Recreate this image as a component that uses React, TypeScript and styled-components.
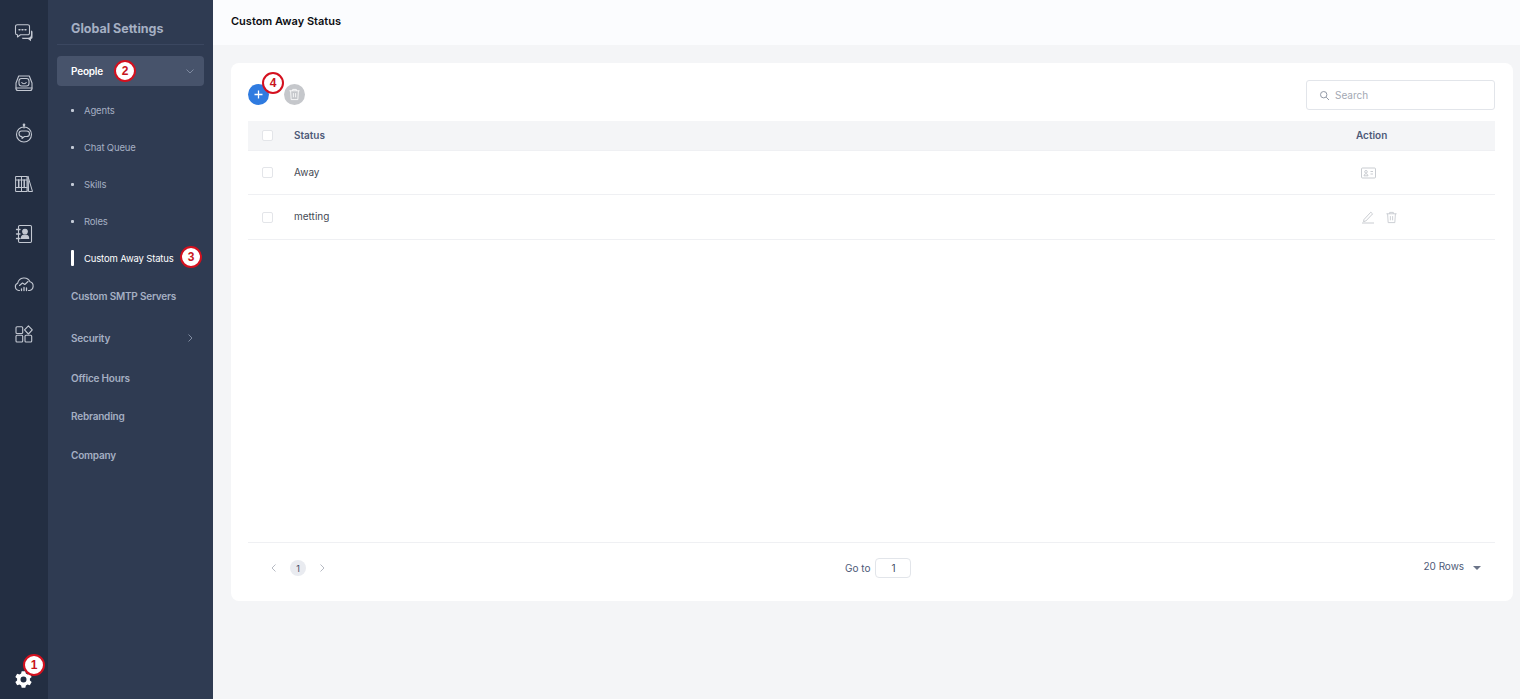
import React from "react";
import styled, { createGlobalStyle } from "styled-components";

const Global = createGlobalStyle`
  html, body { margin: 0; padding: 0; height: 100%; }
  body { font-family: Inter, "Liberation Sans", sans-serif; background: #f4f5f7; overflow: hidden; }
  * { box-sizing: border-box; }
`;

const Page = styled.div`display: flex; width: 1520px; height: 699px;`;
const Rail = styled.nav`
  position: relative; width: 48px; flex: none; background: #232e42; display: flex; flex-direction: column; align-items: center; padding-top: 8px;
`;
const RailItem = styled.div`
  width: 48px; height: 50.2px; display: flex; align-items: center; justify-content: center; color: #c3c8d2;
`;
const RailFoot = styled.div`margin-top: auto; align-self: flex-start; height: 40px; display: flex; align-items: center; justify-content: center; width: 46px; color: #fff;`;

const Side = styled.aside`width: 165px; flex: none; background: #2f3b52; padding: 0 9px; display: flex; flex-direction: column;`;
const SideTitle = styled.div`
  height: 45px; padding: 13px 0 0 14px; border-bottom: 1px solid #3b4760; display: flex; align-items: center;
  color: #a5afc3; font-size: 12.5px; font-weight: 700;
`;
const Group = styled.div<{ $h: number; $active?: boolean }>`
  position: relative; height: ${p => p.$h}px; padding: 0 9px 0 14px; display: flex; align-items: center; justify-content: space-between;
  border-radius: 4px; font-size: 10px; font-weight: 600; letter-spacing: -0.2px;
  color: ${p => (p.$active ? "#fff" : "#a5afc3")};
  background: ${p => (p.$active ? "#47536b" : "transparent")};
  ${p => p.$active && "margin-top: 11px;"}
`;
const Sub = styled.div<{ $active?: boolean }>`
  position: relative; height: 37px; padding-left: 27px; display: flex; align-items: center; font-size: 9.5px; letter-spacing: -0.16px;
  color: ${p => (p.$active ? "#fff" : "#a5afc3")};
  &::before {
    content: ""; position: absolute; left: 14px; top: ${p => (p.$active ? "10px" : "17px")};
    width: 3px; height: ${p => (p.$active ? "16px" : "3px")};
    border-radius: 1px; background: ${p => (p.$active ? "#fff" : "#c3cad6")};
  }
`;
const SubList = styled.div`padding-top: 6px;`;

const Main = styled.main`flex: 1; display: flex; flex-direction: column; min-width: 0;`;
const Header = styled.header`
  height: 45px; flex: none; background: #fbfcfe; padding: 0 18px 4px; display: flex; align-items: center;
  font-size: 11px; font-weight: 600; color: #0c0e12;
`;
const Content = styled.div`padding: 18px 7px 0 18px;`;
const Card = styled.section`
  height: 538px; background: #fff; border-radius: 8px; padding: 17px 18px 0 17px; display: flex; flex-direction: column;
`;
const Toolbar = styled.div`height: 41px; display: flex; align-items: flex-start; justify-content: space-between;`;
const ToolLeft = styled.div`display: flex; align-items: center; gap: 15px; padding-top: 4px;`;
const Round = styled.div<{ $bg: string }>`
  position: relative; width: 21px; height: 21px; border-radius: 50%; background: ${p => p.$bg}; color: #fff;
  display: flex; align-items: center; justify-content: center;
`;
const SearchBox = styled.div`
  width: 189px; height: 30px; border: 1px solid #e2e5ea; border-radius: 3px; display: flex; align-items: center;
  gap: 5px; padding-left: 12px; font-size: 10px; color: #a3a8b3; background: #fff;
`;
const Row = styled.div<{ $head?: boolean; $h: number }>`
  height: ${p => p.$h}px; display: flex; align-items: center; padding: 0 0 2px 14px; border-bottom: 1px solid #eff0f3;
  background: ${p => (p.$head ? "#f4f5f7" : "#fff")};
  font-size: 10px; color: ${p => (p.$head ? "#4e5a78" : "#454a55")}; font-weight: ${p => (p.$head ? 600 : 400)};
`;
const Check = styled.span`
  width: 11px; height: 11px; margin-top: 2px; border: 1px solid #e3e5e9; border-radius: 2px; background: #fff; flex: none; margin-right: 21px;
`;
const Grow = styled.div`flex: 1;`;
const ActionHead = styled.div`width: 139px; flex: none; color: #4e5a78;`;
const ActionCell = styled.div`
  width: 139px; flex: none; display: flex; align-items: center; gap: 10px; padding: 2px 0 0 5px; color: #c3c6cc;
`;
const Footer = styled.footer`
  margin-top: auto; height: 59px; border-top: 1px solid #eff0f3; display: flex; align-items: center;
  font-size: 10px; color: #4e5a78; padding: 0 14px 8px 21px;
`;
const Pager = styled.div`display: flex; align-items: center; gap: 11px; width: 576px;`;
const PageNo = styled.span`
  width: 16px; height: 16px; border-radius: 50%; background: #e9ebf0; color: #3f4a63; font-size: 9px; display: flex; align-items: center; justify-content: center;
`;
const GoTo = styled.div`display: flex; align-items: center; gap: 5px; color: #4e5a78;`;
const GoInput = styled.div`
  width: 36px; height: 20px; border: 1px solid #e2e5ea; border-radius: 4px; display: flex; align-items: center; justify-content: center; color: #3f4a63;
`;
const Rows = styled.div`display: flex; align-items: center; gap: 9px; margin-left: auto; padding-bottom: 4px; letter-spacing: -0.05px;`;
const Caret = styled.span`
  width: 0; height: 0; border-left: 4px solid transparent; border-right: 4px solid transparent; border-top: 4px solid #6b7488; margin-top: 4px;
`;
const Badge = styled.span<{ $x: number; $y: number }>`
  position: absolute; left: ${p => p.$x}px; top: ${p => p.$y}px; width: 22px; height: 22px; border-radius: 50%;
  background: #fff; border: 2px solid #d4101e; color: #c81420; font-size: 12px; font-weight: 700;
  display: flex; align-items: center; justify-content: center; z-index: 5; font-family: "Liberation Sans", sans-serif;
`;
const BadgeLayer = styled.div`position: absolute; left: 0; top: 0;`;

const Ic = ({ children, s = 20, sw = 1.1 }: { children: React.ReactNode; s?: number; sw?: number }) => (
  <svg width={s} height={s} viewBox="0 0 20 20" fill="none" stroke="currentColor" strokeWidth={sw} strokeLinecap="round" strokeLinejoin="round">{children}</svg>
);

const Chevron = ({ dir, color = "#7f8aa0" }: { dir: "down" | "left" | "right"; color?: string }) => (
  <svg width="10" height="10" viewBox="0 0 10 10" fill="none" stroke={color} strokeWidth="1">
    {dir === "down" && <path d="M1.500 3.500 5 7l3.500-3.500" />}
    {dir === "right" && <path d="M3.500 1.500 7 5 3.500 8.500" />}
    {dir === "left" && <path d="M6.500 1.500 3 5l3.500 3.500" />}
  </svg>
);

const Trash = ({ s = 14 }: { s?: number }) => (
  <svg width={s} height={s} viewBox="0 0 14 14" fill="none" stroke="currentColor" strokeWidth="0.9">
    <path d="M1.500 3h11M5 3V1.500h4V3M2.800 3l.6 9.500h7.200l.6-9.500M5.800 5.500v4.500M8.200 5.500v4.500" />
  </svg>
);

const railIcons = [
  <Ic key="a">
    <path d="M1.500 3.500a1.800 1.800 0 0 1 1.800-1.800h10.400a1.800 1.800 0 0 1 1.800 1.800v6.500a1.800 1.800 0 0 1-1.800 1.800H6.500l-3 2.200v-2.200h-.2a1.800 1.800 0 0 1-1.800-1.800z" />
    <path d="M5 6.800h1M8 6.800h1M11 6.800h1" strokeWidth="1.400" />
    <path d="M17 7.500c1 .2 1.500.8 1.500 1.700v5.100c0 1-.6 1.600-1.500 1.700v2.300l-3-2.300H9.500c-.9 0-1.500-.4-1.700-1.200h6.400c1.600 0 2.800-1.200 2.800-2.800z" fill="currentColor" stroke="none" />
  </Ic>,
  <Ic key="b">
    <path d="M4.700 3h10.600L18 10v5.500a2 2 0 0 1-2 2H4a2 2 0 0 1-2-2V10z" />
    <rect x="5" y="5.500" width="10" height="7.500" rx="2.500" />
    <path d="M7.800 9.500c.5.900 1.300 1.200 2.200 1.200s1.700-.3 2.200-1.200" />
    <path d="M2 15h16" />
  </Ic>,
  <Ic key="c">
    <circle cx="10" cy="1.800" r=".8" fill="currentColor" />
    <path d="M10 2.500v2.500" />
    <circle cx="10" cy="11.500" r="7.500" />
    <path d="M7.500 8h5c1.800 0 3 1 3 2.700s-1.200 2.800-3 2.800h-2l-2.500 2v-2c-1.800 0-3-1.100-3-2.800S5.700 8 7.500 8z" />
  </Ic>,
  <Ic key="d" sw={1}>
    <path d="M2 2.500h11v15H2zM7.500 2.500v15M2 6h11M2 13.500h11" />
    <path d="M4.700 6v7.500M10.200 6v7.500" strokeWidth="1.500" />
    <path d="M14 2.500l4.500 15H15zM14 7v10.500" />
  </Ic>,
  <Ic key="e">
    <rect x="4.500" y="1.500" width="13" height="17" rx="1.200" />
    <circle cx="11" cy="7.500" r="2.300" fill="currentColor" />
    <path d="M7.300 14.500c0-2.300 1.600-3.500 3.700-3.500s3.700 1.200 3.700 3.500z" fill="currentColor" />
    <path d="M2.500 5.500h3.500M2.500 10h3.500M2.500 14.500h3.500" strokeWidth="1.300" />
  </Ic>,
  <Ic key="f">
    <path d="M5.500 16.500H4.800A3.800 3.800 0 0 1 3.700 9.200 6.500 6.500 0 0 1 16 7.800a4.500 4.500 0 0 1-.5 8.700h-1" />
    <path d="M5.500 11.500l3-2.500 2.300 1.500 3.200-3" />
    <path d="M7.500 16.500V15M10 16.500v-3M12.500 16.500V14" strokeWidth="1.300" />
  </Ic>,
  <Ic key="g">
    <rect x="2" y="2.800" width="6.700" height="6.700" rx="1" />
    <path d="M14.400 1.800l3.900 4.100-3.900 4.100-3.900-4.100z" />
    <rect x="2" y="11.300" width="6.700" height="6.700" rx="1" />
    <rect x="11" y="11.300" width="6.700" height="6.700" rx="1" />
  </Ic>,
];

export default function App() {
  return (
    <Page>
      <Global />
      <Rail>
        {railIcons.map((icon, i) => <RailItem key={i}>{icon}</RailItem>)}
        <RailFoot>
          <svg width="19" height="19" viewBox="0 0 24 24" fill="currentColor">
            <path fillRule="evenodd" d="M9.700 1.500h4.600l.7 3 2 1.100 3-.9 2.300 4-2.200 2.100v2.400l2.200 2.100-2.300 4-3-.9-2 1.100-.7 3H9.700l-.7-3-2-1.100-3 .9-2.300-4L3.900 13.200v-2.400L1.700 8.700l2.300-4 3 .9 2-1.100zM12 8.200a3.800 3.800 0 1 0 0 7.600 3.800 3.800 0 0 0 0-7.600z" />
          </svg>
        </RailFoot>
      </Rail>
      <Side>
        <SideTitle>Global Settings</SideTitle>
        <Group $h={30} $active>People<Chevron dir="down" /></Group>
        <SubList>
          <Sub>Agents</Sub>
          <Sub>Chat Queue</Sub>
          <Sub>Skills</Sub>
          <Sub>Roles</Sub>
          <Sub $active>Custom Away Status</Sub>
        </SubList>
        <Group $h={38}>Custom SMTP Servers</Group>
        <Group $h={45}>Security<Chevron dir="right" /></Group>
        <Group $h={35}>Office Hours</Group>
        <Group $h={41}>Rebranding</Group>
        <Group $h={38}>Company</Group>
      </Side>
      <Main>
        <Header>Custom Away Status</Header>
        <Content>
          <Card>
            <Toolbar>
              <ToolLeft>
                <Round $bg="#2f7be0">
                  <svg width="11" height="11" viewBox="0 0 11 11" stroke="currentColor" strokeWidth="1.300"><path d="M5.500 1.500v8M1.500 5.500h8" /></svg>
                </Round>
                <Round $bg="#c5c7cb"><Trash s={13} /></Round>
              </ToolLeft>
              <SearchBox>
                <svg width="11" height="11" viewBox="0 0 11 11" fill="none" stroke="#9299a6" strokeWidth="1"><circle cx="4.700" cy="4.700" r="3.200" /><path d="M7.200 7.200 10 10" /></svg>
                Search
              </SearchBox>
            </Toolbar>
            <Row $head $h={30}>
              <Check /><Grow>Status</Grow><ActionHead>Action</ActionHead>
            </Row>
            <Row $h={44}>
              <Check /><Grow>Away</Grow>
              <ActionCell>
                <svg width="15" height="12" viewBox="0 0 15 12" fill="none" stroke="currentColor" strokeWidth=".9"><rect x=".5" y="1" width="14" height="10" rx="1" /><circle cx="5" cy="4.800" r="1.300" /><path d="M3 8.800c0-1.300 1-2 2-2s2 .7 2 2zM9.500 4.500h2.500M9.500 7h2.500" /></svg>
              </ActionCell>
            </Row>
            <Row $h={45}>
              <Check /><Grow>metting</Grow>
              <ActionCell>
                <svg width="14" height="14" viewBox="0 0 14 14" fill="none" stroke="currentColor" strokeWidth=".9"><path d="M3 9.500 9.800 2.200l1.800 1.700-6.800 7.100-2.300.6zM1 13h12" /></svg>
                <Trash s={13} />
              </ActionCell>
            </Row>
            <Footer>
              <Pager>
                <Chevron dir="left" color="#b6bac3" /><PageNo>1</PageNo><Chevron dir="right" color="#b6bac3" />
              </Pager>
              <GoTo>Go to <GoInput>1</GoInput></GoTo>
              <Rows>20 Rows <Caret /></Rows>
            </Footer>
          </Card>
        </Content>
      </Main>
      <BadgeLayer>
        <Badge $x={23} $y={654}>1</Badge>
        <Badge $x={114} $y={60}>2</Badge>
        <Badge $x={180} $y={246}>3</Badge>
        <Badge $x={262} $y={72}>4</Badge>
      </BadgeLayer>
    </Page>
  );
}
